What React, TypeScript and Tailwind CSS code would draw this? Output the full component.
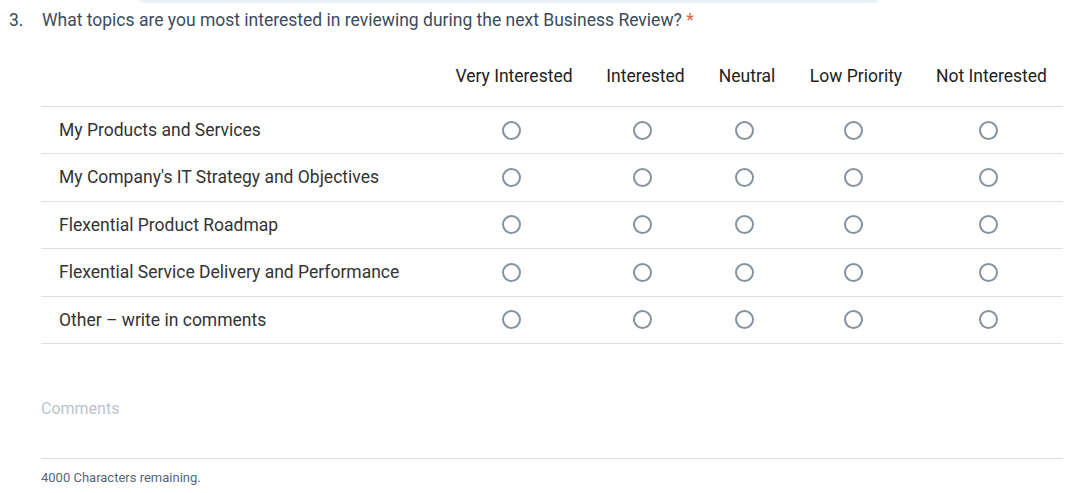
import React from 'react';

const COLUMNS = [
  { label: 'Very Interested', w: 'w-[150px]' },
  { label: 'Interested', w: 'w-[113px]' },
  { label: 'Neutral', w: 'w-[90px]' },
  { label: 'Low Priority', w: 'w-[128px]' },
  { label: 'Not Interested', w: 'w-[143px]' },
];

const ROWS = [
  'My Products and Services',
  "My Company's IT Strategy and Objectives",
  'Flexential Product Roadmap',
  'Flexential Service Delivery and Performance',
  'Other \u2013 write in comments',
];

function Radio() {
  return <span className="block w-[19px] h-[19px] rounded-full border-2 border-[#8593a0] bg-white" />;
}

export default function App() {
  return (
    <div className="w-[1091px] h-[493px] bg-white overflow-hidden" style={{ fontFamily: 'Roboto, "Liberation Sans", sans-serif' }}>
      {/* faint strip left by the element above */}
      <div className="ml-[140px] w-[738px] h-[3px] bg-[#eaf2f9] rounded-b-sm" />

      {/* Question */}
      <div className="flex items-center h-[35px] text-[17.5px] text-[#3d4b5c]">
        <span className="w-[42px] pl-[9px]">3.</span>
        <span>
          What topics are you most interested in reviewing during the next Business Review?{' '}
          <span className="text-[#e0623f]">*</span>
        </span>
      </div>

      {/* Matrix */}
      <div className="ml-[41px] w-[1022px] mt-[18px]">
        <div className="flex h-[51px] border-b border-[#dedede] text-[17.5px] text-[#222]">
          <div className="w-[398px]" />
          {COLUMNS.map((c) => (
            <div key={c.label} className={`${c.w} flex items-center justify-center pb-[10px]`}>
              {c.label}
            </div>
          ))}
        </div>
        {ROWS.map((r) => (
          <div key={r} className="flex h-[47.4px] border-b border-[#dedede] text-[17.5px] text-[#333]">
            <div className="w-[398px] flex items-center pl-[18px]">{r}</div>
            {COLUMNS.map((c) => (
              <div key={c.label} className={`${c.w} flex items-center justify-center pr-[6px]`}>
                <Radio />
              </div>
            ))}
          </div>
        ))}
      </div>

      {/* Comments */}
      <div className="ml-[41px] w-[1022px]">
        <div className="h-[115px] border-b border-[#dedede] pt-[53px] text-[16px] leading-6 text-[#b9c4cc]">Comments</div>
        <div className="mt-[11px] text-[13px] leading-4 text-[#56667a]">4000 Characters remaining.</div>
      </div>
    </div>
  );
}
